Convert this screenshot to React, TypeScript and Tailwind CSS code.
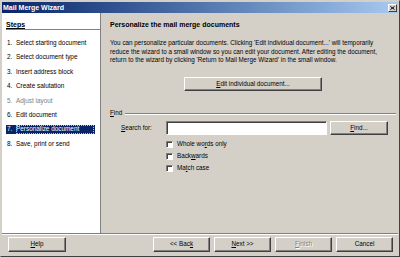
import React from "react";

const steps = [
  { n: "1.", t: "Select starting document" },
  { n: "2.", t: "Select document type" },
  { n: "3.", t: "Insert address block" },
  { n: "4.", t: "Create salutation" },
  { n: "5.", t: "Adjust layout", disabled: true },
  { n: "6.", t: "Edit document" },
  { n: "7.", t: "Personalize document", selected: true },
  { n: "8.", t: "Save, print or send" },
];

function Btn({ children, className = "", disabled = false }: { children: React.ReactNode; className?: string; disabled?: boolean }) {
  return (
    <div
      className={
        "flex items-center justify-center h-[15px] bg-[#d4d0c8] border border-t-white border-l-white border-r-[#404040] border-b-[#404040] shadow-[inset_-1px_-1px_0_#808080] text-[6.3px] leading-none " +
        (disabled ? "text-[#808080] [text-shadow:1px_1px_0_#fff] " : "text-black ") +
        className
      }
    >
      {children}
    </div>
  );
}

function Check({ children }: { children: React.ReactNode }) {
  return (
    <div className="flex items-center h-[12px]">
      <div className="w-[7px] h-[7px] bg-white border border-t-[#808080] border-l-[#808080] border-r-white border-b-white shadow-[inset_1px_1px_0_#404040]" />
      <span className="ml-[4px] text-[6.3px] leading-none">{children}</span>
    </div>
  );
}

export default function App() {
  return (
    <div className="w-[400px] h-[257px] bg-[#d4d0c8] flex flex-col border border-t-[#d4d0c8] border-l-[#d4d0c8] border-r-[#404040] border-b-[#404040] p-[1px] font-['Liberation_Sans',Arial,sans-serif] text-black overflow-hidden">
      {/* Title bar */}
      <div className="h-[11px] flex items-center bg-gradient-to-r from-[#0a246a] to-[#a6caf0] pl-[1px] pr-[1px]">
        <span className="text-white font-bold text-[7px] leading-none">Mail Merge Wizard</span>
        <div className="ml-auto w-[9px] h-[8px] bg-[#d4d0c8] border border-t-white border-l-white border-r-[#404040] border-b-[#404040] flex items-center justify-center">
          <svg width="5" height="4" viewBox="0 0 5 4">
            <path d="M0.5 0.5 L4.5 3.5 M4.5 0.5 L0.5 3.5" stroke="#000" strokeWidth="1" />
          </svg>
        </div>
      </div>

      {/* Body */}
      <div className="h-[220px] flex">
        {/* Left panel */}
        <div className="w-[99px] bg-white border-r border-r-[#808080] pl-[4px] pt-[7px]">
          <div className="h-[10px] border-b border-b-[#808080] text-[7px] leading-[9px] font-bold">
            <span className="underline">Steps</span>
          </div>
          <div className="mt-[6px] flex flex-col">
            {steps.map((s) => (
              <div key={s.n} className="h-[14.4px] flex items-center">
                <div
                  className={
                    "flex items-center h-[9px] w-[89px] text-[6.4px] leading-none " +
                    (s.selected ? "bg-[#0a246a] text-white " : s.disabled ? "text-[#808080] " : "text-black ")
                  }
                >
                  <span className="w-[10px] pl-[1px]">{s.n}</span>
                  <span
                    className={
                      "h-[9px] flex items-center pr-[1px] " +
                      (s.selected ? "outline outline-1 outline-dotted outline-[#d9c57a] -outline-offset-1 w-[78px]" : "")
                    }
                  >
                    {s.t}
                  </span>
                </div>
              </div>
            ))}
          </div>
        </div>

        {/* Right panel */}
        <div className="flex-1 pl-[9px] pr-[2px] pt-[7px] flex flex-col">
          <div className="h-[9px] leading-[9px] text-[7px] font-bold">Personalize the mail merge documents</div>
          <div className="mt-[10px] text-[6.3px] leading-[8.7px] w-[278px]">
            You can personalize particular documents. Clicking 'Edit individual document...' will temporarily reduce the wizard to a small window so you can edit your document. After editing the document, return to the wizard by clicking 'Return to Mail Merge Wizard' in the small window.
          </div>
          <Btn className="mt-[12px] ml-[74px] w-[138px] !h-[14px]">
            <span>
              <span className="underline">E</span>dit individual document...
            </span>
          </Btn>

          {/* Find */}
          <div className="mt-[18px] h-[9px] flex items-center">
            <span className="text-[6.3px] leading-none">
              <span className="underline">F</span>ind
            </span>
            <div className="flex-1 ml-[3px] h-[2px] border-t border-t-[#808080] border-b border-b-white" />
          </div>
          <div className="mt-[3px] h-[14px] flex items-center">
            <span className="ml-[11px] w-[45px] text-[6.3px] leading-none">
              <span className="underline">S</span>earch for:
            </span>
            <div className="w-[161px] h-[14px] bg-white border border-t-[#808080] border-l-[#808080] border-r-white border-b-white shadow-[inset_1px_1px_0_#404040]" />
            <Btn className="ml-[3px] w-[58px] !h-[14px]">
              <span>
                <span className="underline">F</span>ind...
              </span>
            </Btn>
          </div>
          <div className="mt-[3px] ml-[56px] flex flex-col">
            <Check>
              Whole wo<span className="underline">r</span>ds only
            </Check>
            <Check>
              Back<span className="underline">w</span>ards
            </Check>
            <Check>
              Ma<span className="underline">t</span>ch case
            </Check>
          </div>
        </div>
      </div>

      {/* Separator */}
      <div className="h-[2px] border-t border-t-[#808080] border-b border-b-white" />

      {/* Footer */}
      <div className="flex-1 flex items-start pt-[2px] pl-[6px]">
        <Btn className="w-[58px]">
          <span>
            <span className="underline">H</span>elp
          </span>
        </Btn>
        <div className="ml-auto mr-[5px] flex gap-[4px]">
          <Btn className="w-[57px]">
            <span>
              &lt;&lt; Bac<span className="underline">k</span>
            </span>
          </Btn>
          <Btn className="w-[57px]">
            <span>
              <span className="underline">N</span>ext &gt;&gt;
            </span>
          </Btn>
          <Btn className="w-[57px]" disabled>
            <span>
              <span className="underline">F</span>inish
            </span>
          </Btn>
          <Btn className="w-[57px]">Cancel</Btn>
        </div>
      </div>
    </div>
  );
}
